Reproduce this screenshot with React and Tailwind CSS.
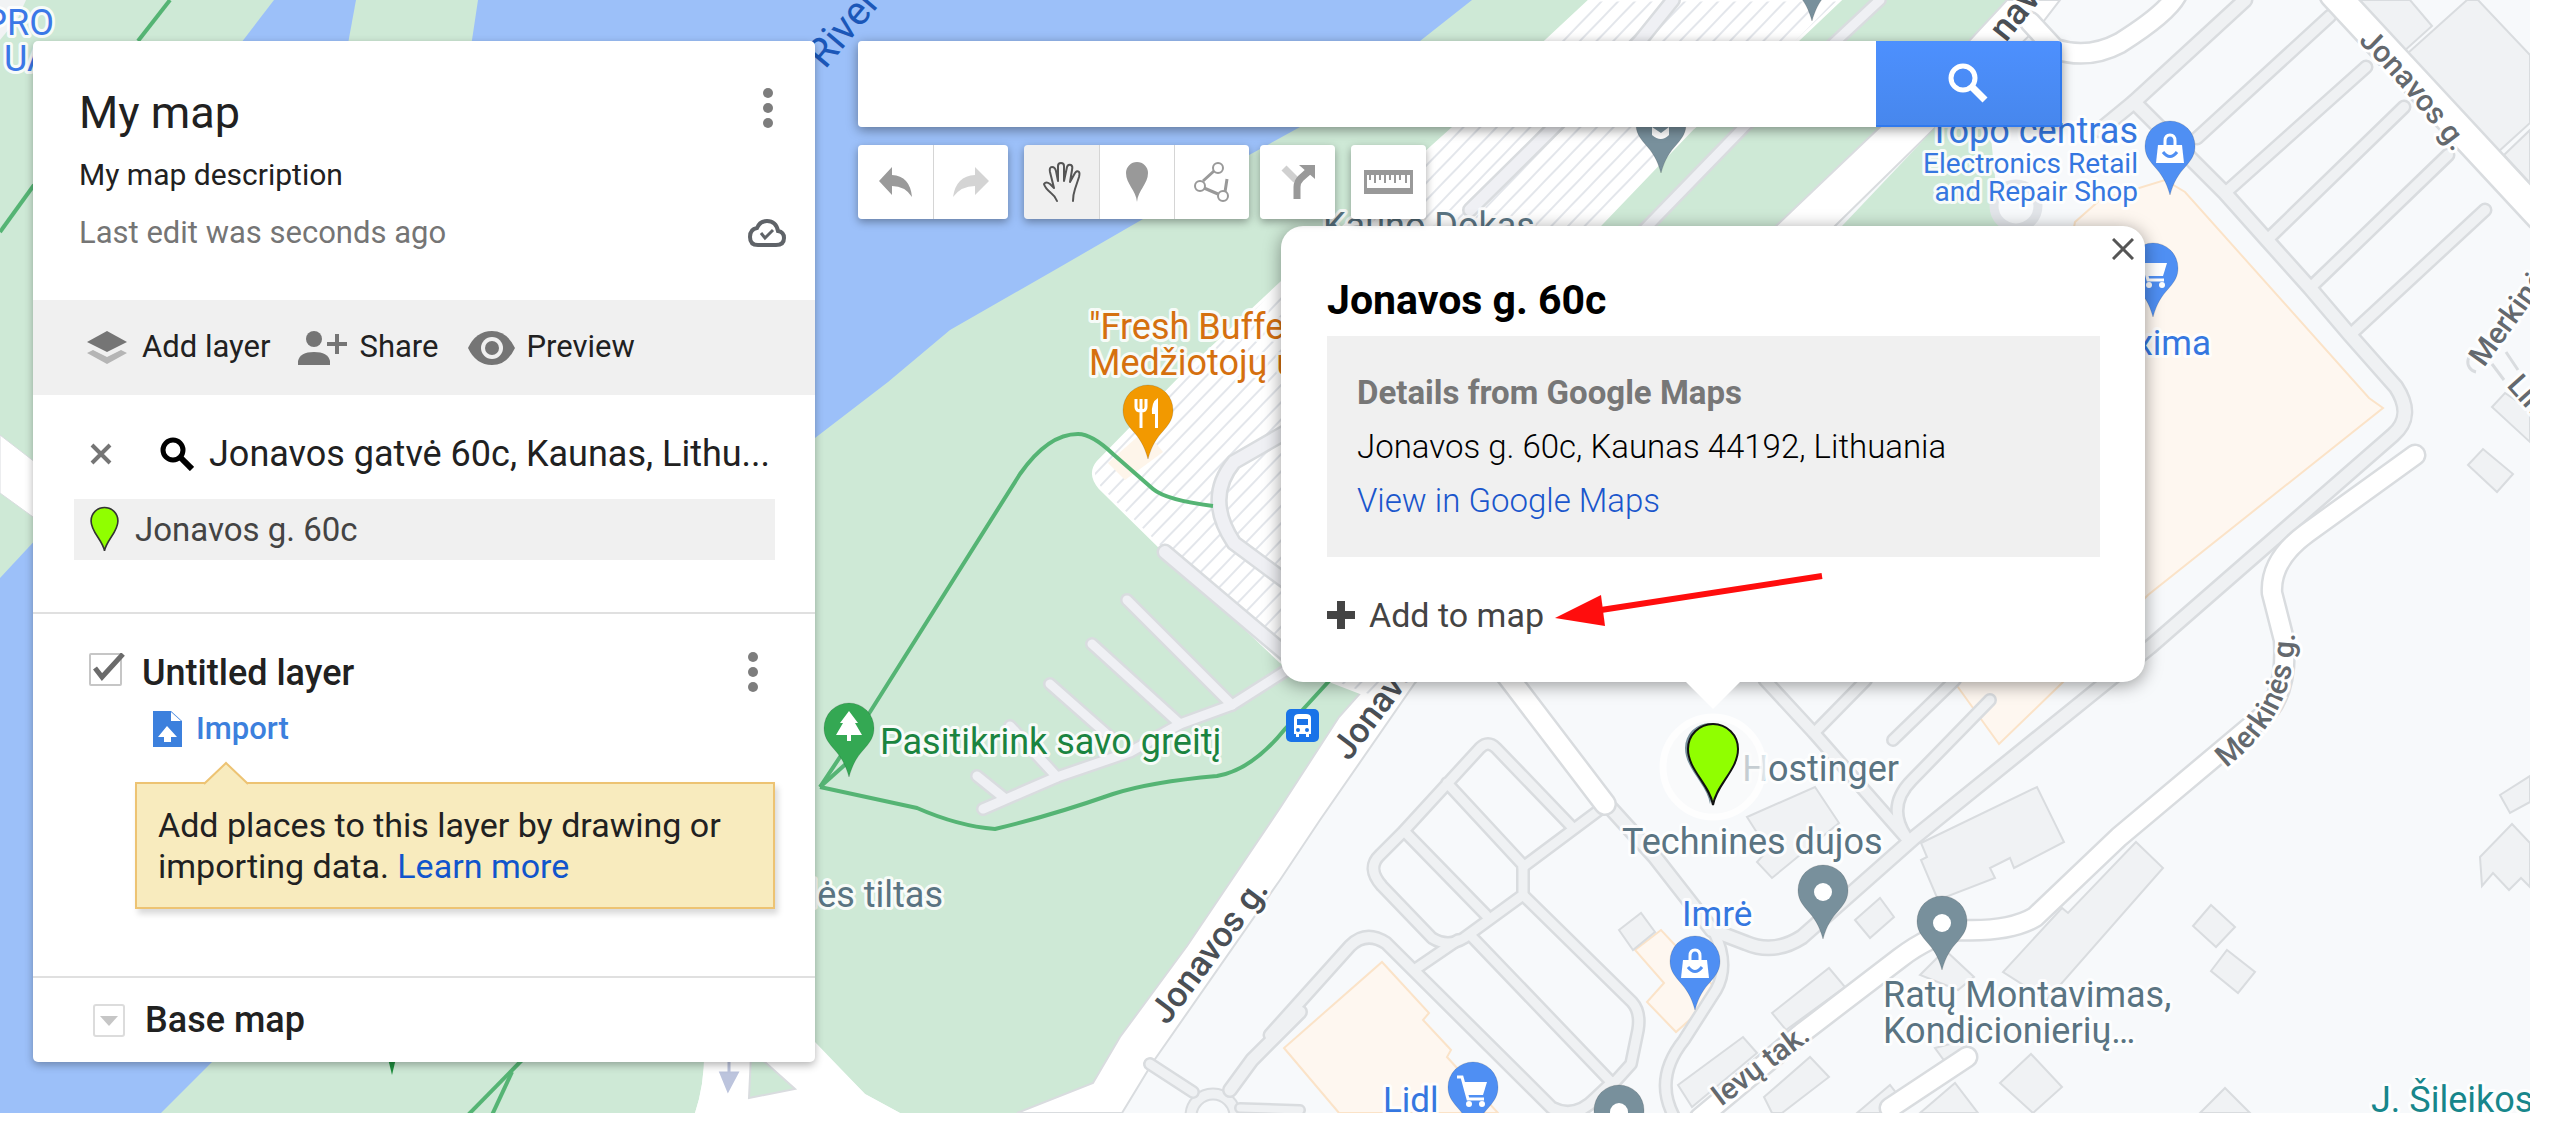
import { useState } from 'react';

const OUTLINE = '#d9dcdf';

// Minor streets: [path, width]
const STREETS = [
  ['M2100 130 L2134 102 L2245 0', 12],
  ['M2134 102 L2225 193 L2267 240 L2310 288 L2350 335 L2396 387 Q2415 416 2393 435 L2150 647 L1915 837 L1802 937 Q1774 955 1746 943 L1712 930 L1655 857 L1606 803', 12],
  ['M2197 138 L2330 16', 10],
  ['M2225 193 L2366 67', 10],
  ['M2267 240 L2404 107', 10],
  ['M2310 288 L2448 155', 10],
  ['M2350 335 L2485 210', 10],
  ['M1572 827 L1496 748 Q1488 740 1480 748 L1402 833 L1380 855 Q1366 868 1382 886 L1432 938 Q1448 948 1464 938 L1523 895 L1523 865 L1447 783', 9],
  ['M1523 867 L1606 805', 9],
  ['M1406 833 L1486 915', 9],
  ['M1417 968 L1458 940', 9],
  ['M1523 895 L1632 1002 Q1641 1012 1638 1030 L1631 1064 L1613 1084', 9],
  ['M1472 937 L1613 1084', 9],
  ['M1270 1035 L1350 946 Q1366 930 1386 943 L1552 1108 Q1575 1120 1596 1098 L1613 1082', 10],
  ['M1714 932 Q1730 965 1716 990 L1684 1040 Q1652 1080 1676 1120', 9],
  ['M1765 680 L1814 733 L1908 840', 10],
  ['M1814 733 L1866 680', 9],
  ['M1893 740 L1955 680', 9],
  ['M1906 836 Q1886 806 1912 780 L1990 700', 9],
  ['M1150 1064 L1193 1092', 9],
  ['M1230 1090 L1252 1060 L1300 1012', 11],
  ['M1240 1108 L1300 1110', 7],
];

const PARK_LANES = [
  ['M983 809 L1057 777 L1130 752 L1180 724 L1232 705 L1290 668', 9],
  ['M1127 600 L1232 705', 9],
  ['M1092 644 L1180 724', 9],
  ['M1050 684 L1110 737', 9],
  ['M1010 726 L1057 777', 9],
  ['M977 776 L1003 797', 9],
  ['M1165 552 L1300 666', 12],
  ['M1300 424 L1234 462 Q1204 498 1234 543 L1300 592', 12],
  ['M1673 0 L1640 41 L1553 128 L1470 210', 11],
  ['M1880 0 L1743 128 L1640 234', 9],
];

const WHITE_ROADS = [
  ['M2334 -6 L2540 216', 27],
  ['M2176 -4 Q2166 14 2120 43 Q2088 60 2055 49 L2030 22', 18],
  ['M2415 455 L2307 533 Q2270 560 2272 593 L2284 640 Q2288 700 2256 722 L2119 837 L2035 917 Q2010 932 1960 930 Q1930 935 1900 958 L1802 1033 L1700 1118', 18],
  ['M1967 1057 L1890 1108', 18],
  ['M1480 640 L1605 804', 19],
];

const BUILDINGS = [
  '2348,0 2410,0 2432,26 2402,53',
  '2408,53 2467,0 2478,0 2530,55 2530,123 2498,152',
  '2504,155 2530,130 2530,183',
  '2468,465 2483,449 2513,474 2497,492',
  '2492,407 2505,393 2530,410 2530,442',
  '1747,817 1815,787 1839,823 1772,878 1757,862 1768,850',
  '1619,930 1641,913 1655,932 1633,950',
  '1855,920 1880,898 1894,917 1870,938',
  '1772,1013 1829,968 1845,987 1786,1030',
  '1678,1085 1743,1037 1757,1053 1692,1107',
  '1764,1097 1810,1057 1829,1077 1782,1113 1772,1113',
  '1857,1113 1890,1085 1904,1103 1895,1113',
  '1921,843 2037,787 2064,842 2014,868 2010,858 1990,868 1995,878 1938,900 1921,860 1927,857',
  '2136,842 2163,868 2047,1000 2003,972 2062,908 2068,913',
  '2211,905 2235,927 2216,947 2193,926',
  '2227,950 2255,972 2238,993 2211,971',
  '2031,1054 2062,1087 2033,1113 2000,1083',
  '2225,1088 2250,1113 2200,1113',
  '2500,795 2530,776 2530,802 2510,813',
  '2480,857 2512,824 2530,843 2530,887 2521,878 2509,890 2493,873 2482,886',
  '1920,1113 1955,1083 1978,1113',
  '1920,975 1945,950 1974,977 1958,990',
  '1935,1048 1965,1040 1972,1055 1951,1070',
];

const SHOPS = [
  '2075,222 2100,200 2165,180 2185,192 2369,398 2383,408 2148,595 2062,683 1999,744 1955,683 2000,600',
  '1635,950 1661,930 1720,993 1676,1032 1647,1002 1664,983',
  '1382,962 1429,1013 1423,1020 1451,1050 1447,1057 1498,1113 1339,1113 1284,1048',
];

const TRAILS = [
  'M820 787 L870 712 L1020 474 Q1048 434 1078 434 Q1092 434 1113 454 L1153 489 Q1166 500 1213 506',
  'M820 787 L917 808 Q958 826 995 829 Q1050 816 1113 794 Q1150 782 1217 776 Q1252 770 1285 729 L1330 680',
  'M820 787 L848 762',
  'M170 0 L138 41',
  'M34 185 L0 232',
  'M524 1058 L468 1115',
  'M512 1072 L492 1115',
];

const PIN = 'M0 0 C-4 -14 -8 -20 -16 -29 C-22 -36 -25 -41 -25 -49 A25 25 0 1 1 25 -49 C25 -41 22 -36 16 -29 C8 -20 4 -14 0 0Z';
const DROP = 'M0 0 C-3 -20 -25 -35 -25 -56 A25 25 0 0 1 25 -56 C25 -35 3 -20 0 0Z';

function Roads({ items, fill }) {
  return (
    <g fill="none" strokeLinejoin="round" strokeLinecap="round">
      {items.map(([d, w]) => <path key={d} d={d} stroke={OUTLINE} strokeWidth={w + 5} />)}
      {items.map(([d, w]) => <path key={d} d={d} stroke={fill} strokeWidth={w} />)}
    </g>
  );
}

function MapPin({ x, y, color, children }) {
  return (
    <g transform={`translate(${x} ${y})`}>
      <path d={PIN} fill={color} stroke="#00000022" />
      {children}
    </g>
  );
}

const Dot = () => <circle cy="-47" r="9" fill="#fff" />;

const Bag = () => (
  <g transform="translate(0 -46)">
    <path d="M-12 -4 H12 L14 14 H-14Z" fill="#fff" />
    <path d="M-5 -4 V-8 Q-5 -14 0 -14 Q5 -14 5 -8 V-4" fill="none" stroke="#fff" strokeWidth="3" />
    <path d="M-7 3 Q0 12 7 3" fill="none" stroke="#4f8ff3" strokeWidth="3" />
  </g>
);

const Cart = () => (
  <g transform="translate(0 -46)">
    <path d="M-9 -8 H14 L10 5 H-6Z" fill="#fff" />
    <path d="M-16 -13 H-11 L-5 9 H11" fill="none" stroke="#fff" strokeWidth="3" />
    <circle cx="-4" cy="14" r="3" fill="#fff" />
    <circle cx="9" cy="14" r="3" fill="#fff" />
  </g>
);

function Label({ x, y, color, size = 'text-[36px]', anchor = 'start', rotate, bold, children }) {
  return (
    <text
      x={x} y={y} textAnchor={anchor} fill={color} stroke="#ffffffd9" strokeWidth="6" strokeLinejoin="round"
      transform={rotate ? `rotate(${rotate} ${x} ${y})` : undefined}
      className={`[paint-order:stroke] ${size} ${bold ? 'font-medium' : 'font-normal'}`}
    >
      {children}
    </text>
  );
}

function MapCanvas() {
  return (
    <svg viewBox="0 0 2530 1113" className="block w-full h-auto overflow-hidden" role="img" aria-label="Map of Kaunas">
      <defs>
        <pattern id="hatch" width="12" height="12" patternUnits="userSpaceOnUse" patternTransform="rotate(44)">
          <rect width="12" height="12" fill="#fff" />
          <rect width="2" height="12" fill="#e3e6eb" />
        </pattern>
        <path id="jonavosEast" d="M2358 42 Q2402 82 2468 172" />
        <path id="merkines" d="M2226 768 Q2286 722 2293 660 L2298 600" />
      </defs>
      <rect width="2530" height="1113" fill="#f7f9fb" />

      {/* parkland */}
      <path d="M0 0 H2007 L1969 41 L1880 127 L1776 226 L1339 717 L1280 808 L1187 946 L1120 1037 L1093 1083 L1017 1113 H900 L865 1094 L815 1044 L780 1040 H704 Q706 1080 695 1113 H0Z" fill="#cee9d6" />
      <path d="M695 1113 Q706 1080 704 1040 L815 1042 L865 1094 L900 1113Z" fill="#fff" />
      <path d="M751 1055 L765 1062 L795 1089 L749 1098Z" fill="#cee9d6" stroke={OUTLINE} strokeWidth="2" />
      <path d="M0 0 H26 L18 18 L0 40Z" fill="#f1f3f4" />

      {/* river */}
      <path d="M478 0 H1472 L1420 41 L1300 127 L1240 160 L1143 219 L1060 267 L950 330 L888 382 L815 438 L700 520 H400Z" fill="#9cc0f9" />
      <path d="M274 0 H356 L345 60 H228Z" fill="#9cc0f9" />
      <path d="M40 535 L0 578 V1113 H161 L212 1062 L300 900Z" fill="#9cc0f9" />
      <path d="M0 435 L40 466 V522 L0 493Z" fill="#fff" stroke={OUTLINE} />

      {/* main road */}
      <path d="M2007 0 L1969 41 L1880 127 L1776 226 L1339 717 L1280 808 L1187 946 L1120 1037 L1093 1083 L1017 1113 H1122 L1153 1062 L1280 880 L1320 820 L1415 683 L1835 226 L1935 128 L2043 22 L2060 0Z" fill="#fff" stroke={OUTLINE} strokeWidth="2" />
      <path d="M1842 226 L1935 128 L1990 128 L2000 226Z" fill="#cee9d6" />

      {/* docks */}
      <path d="M1590 0 H1840 L1797 41 L1693 128 L1600 225 L1380 700 L1281 662 L1165 552 L1100 488 Q1088 474 1098 462 L1186 372 L1281 283 L1453 128Z" fill="url(#hatch)" stroke="#fff" strokeWidth="3" />
      <path d="M1108 463 L1145 430 L1163 452 L1125 480Z" fill="#fef5ea" />

      <Roads items={PARK_LANES} fill="#eff0f4" />
      <circle cx="2016" cy="206" r="22" fill="#f7f9fb" stroke="#e2e5e9" strokeWidth="9" />

      <g fill="#fef7f0" stroke="#fbe3c8" strokeWidth="2">
        {SHOPS.map((p) => <polygon key={p} points={p} />)}
      </g>
      <g fill="#f0f2f4" stroke={OUTLINE} strokeWidth="2">
        {BUILDINGS.map((p) => <polygon key={p} points={p} />)}
      </g>
      <circle cx="1213" cy="1116" r="22" fill="#f7f9fb" stroke={OUTLINE} strokeWidth="13" />
      <circle cx="1213" cy="1116" r="22" fill="none" stroke="#eff1f3" strokeWidth="9" />
      <Roads items={STREETS} fill="#eff1f3" />
      <Roads items={WHITE_ROADS} fill="#fff" />
      <path d="M2480 352 A9 9 0 1 0 2476 372 M2492 364 L2504 380 M2506 352 L2518 370" fill="none" stroke={OUTLINE} strokeWidth="3" />

      <g fill="none" stroke="#55b474" strokeWidth="4" strokeLinejoin="round">
        {TRAILS.map((d) => <path key={d} d={d} />)}
      </g>
      <path d="M729 1055 V1078 M721 1073 L728 1090 L737 1073Z" fill="#bcc4dd" stroke="#bcc4dd" strokeWidth="3" />

      <MapPin x={849} y={777} color="#34a853">
        <path d="M0 -66 L9 -54 H6 L13 -42 H2 V-36 H-2 V-42 H-13 L-6 -54 H-9Z" fill="#fff" />
      </MapPin>
      <path d="M386 1050 L392 1075 L398 1050Z" fill="#1e8e3e" />
      <MapPin x={1148} y={459} color="#f29900">
        <path d="M-12 -60 V-52 Q-12 -48 -7 -48 Q-2 -48 -2 -52 V-60 M-7 -60 V-31" fill="none" stroke="#fff" strokeWidth="3" />
        <path d="M10 -61 Q3 -57 4 -45 H7 V-31 H10Z" fill="#fff" />
      </MapPin>
      <MapPin x={1661} y={173} color="#78909c">
        <path d="M-9 -46 L0 -40 L8 -46 V-38 Q0 -30 -9 -38Z" fill="#fff" />
      </MapPin>
      <MapPin x={1812} y={21} color="#78909c" />
      <MapPin x={2170} y={195} color="#4f8ff3"><Bag /></MapPin>
      <MapPin x={2153} y={317} color="#4f8ff3"><Cart /></MapPin>
      <MapPin x={1695} y={1010} color="#4f8ff3"><Bag /></MapPin>
      <MapPin x={1473} y={1136} color="#4f8ff3"><Cart /></MapPin>
      <MapPin x={1823} y={939} color="#78909c"><Dot /></MapPin>
      <MapPin x={1942} y={970} color="#78909c"><Dot /></MapPin>
      <MapPin x={1619} y={1159} color="#78909c"><Dot /></MapPin>

      {/* bus stop */}
      <g transform="translate(1286 709)">
        <rect width="33" height="33" rx="5" fill="#1a73e8" />
        <path d="M8 9 Q8 5 13 5 H20 Q25 5 25 9 V25 H23 V28 H20 V25 H13 V28 H10 V25 H8Z" fill="#fff" />
        <path d="M11 10 H22 V16 H11Z" fill="#1a73e8" />
        <circle cx="12" cy="21" r="2" fill="#1a73e8" />
        <circle cx="21" cy="21" r="2" fill="#1a73e8" />
      </g>

      <Label x={54} y={35} anchor="end" color="#3b78e7">PRO</Label>
      <Label x={4} y={71} color="#3b78e7">UA</Label>
      <text x="825" y="70" transform="rotate(-50 825 70)" fill="#1b57b8" className="text-[40px]">River</text>
      <Label x={1089} y={339} color="#d5700f">"Fresh Buffet"</Label>
      <Label x={1089} y={375} color="#d5700f">Medžiotojų užeiga</Label>
      <Label x={880} y={754} color="#1b8440">Pasitikrink savo greitį</Label>
      <Label x={943} y={907} anchor="end" color="#5a7482">Vilijampolės tiltas</Label>
      <Label x={1323} y={238} color="#5a7482">Kauno Dokas</Label>
      <Label x={1167} y={1026} rotate={-53} bold color="#4a4f55" size="text-[35px]">Jonavos g.</Label>
      <Label x={1349} y={762} rotate={-53} bold color="#4a4f55" size="text-[35px]">Jonavos g.</Label>
      <Label x={2006} y={43} rotate={-51} bold color="#4a4f55" size="text-[36px]">navos g.</Label>
      <g fill="#64696e" stroke="#fff" strokeWidth="6" className="[paint-order:stroke] text-[30px] font-medium">
        <text><textPath href="#jonavosEast">Jonavos g.</textPath></text>
        <text><textPath href="#merkines">Merkinės g.</textPath></text>
      </g>
      <Label x={2484} y={368} rotate={-54} bold color="#64696e" size="text-[30px]">Merkinės g.</Label>
      <Label x={2506} y={386} rotate={48} bold color="#64696e" size="text-[30px]">Lino</Label>
      <Label x={1721} y={1107} rotate={-37} bold color="#64696e" size="text-[30px]">Ievų tak.</Label>
      <Label x={2138} y={143} anchor="end" color="#3577e0">Topo centras</Label>
      <Label x={2138} y={173} anchor="end" color="#3577e0" size="text-[28px]">Electronics Retail</Label>
      <Label x={2138} y={201} anchor="end" color="#3577e0" size="text-[28px]">and Repair Shop</Label>
      <Label x={2211} y={355} anchor="end" color="#3577e0" size="text-[35px]">Maxima</Label>
      <Label x={1682} y={926} color="#3577e0" size="text-[35px]">Imrė</Label>
      <Label x={1383} y={1112} color="#3577e0" size="text-[35px]">Lidl</Label>
      <Label x={1899} y={781} anchor="end" color="#5a7482">Hostinger</Label>
      <Label x={1622} y={854} color="#5a7482">Technines dujos</Label>
      <Label x={1883} y={1007} color="#5a7482">Ratų Montavimas,</Label>
      <Label x={1883} y={1043} color="#5a7482">Kondicionierių…</Label>
      <Label x={2371} y={1112} color="#17868b">J. Šileikos</Label>

      {/* selected place */}
      <circle cx="1713" cy="767" r="50" fill="#fafafaaa" stroke="#ffffffcc" strokeWidth="7" />
      <g transform="translate(1713 805)">
        <path d={DROP} fill="#78909c" transform="translate(-3 -1)" />
        <path d={DROP} fill="#90ff00" stroke="#111" strokeWidth="2" />
      </g>
    </svg>
  );
}

function MoreDots() {
  return (
    <svg width="36" height="46" viewBox="0 0 36 46" fill="#7d7d7d" aria-hidden="true">
      <circle cx="18" cy="8" r="5" /><circle cx="18" cy="23" r="5" /><circle cx="18" cy="38" r="5" />
    </svg>
  );
}

function LayersPanel() {
  const [visible, setVisible] = useState(true);
  return (
    <aside className="w-[782px] shrink-0 bg-white rounded-[5px] shadow-[0_3px_8px_rgba(0,0,0,0.3)] text-[#212121]">
      <header className="pl-[46px] pr-[29px] pt-11 pb-[47px]">
        <div className="flex items-start justify-between">
          <h1 className="text-[45px] leading-[56px]">My map</h1>
          <button type="button" aria-label="Map options"><MoreDots /></button>
        </div>
        <p className="mt-3.5 text-[30px] leading-10">My map description</p>
        <div className="mt-[18px] flex items-center justify-between">
          <span className="text-[31px] leading-10 text-[#757575]">Last edit was seconds ago</span>
          <svg width="38" height="28" viewBox="0 0 38 28" fill="none" stroke="#5f6368" strokeWidth="4" aria-label="Saved">
            <path d="M10 26 H28 Q36 26 36 19 Q36 13 30 12 Q28 2 19 2 Q12 2 9 9 Q2 10 2 18 Q2 26 10 26Z" />
            <path d="M13 14 L17 19 L25 11" strokeWidth="3" />
          </svg>
        </div>
      </header>

      <nav className="h-[95px] bg-[#f0f0f0] pl-[54px] flex items-center text-[31px]">
        <button type="button" className="flex items-center gap-[15px]">
          <svg width="40" height="34" viewBox="0 0 40 34" aria-hidden="true">
            <path d="M0 22 L6 19 L20 26 L34 19 L40 22 L20 33Z" fill="#b5b5b5" />
            <path d="M20 0 L40 11 L20 21 L0 11Z" fill="#757575" />
          </svg>
          Add layer
        </button>
        <button type="button" className="ml-7 flex items-center gap-[11px]">
          <svg width="50" height="34" viewBox="0 0 50 34" fill="#757575" aria-hidden="true">
            <circle cx="16" cy="8" r="8" />
            <path d="M0 34 V30 Q2 21 16 21 Q30 21 32 30 V34Z" />
            <path d="M37 3 H41 V11 H49 V15 H41 V23 H37 V15 H29 V11 H37Z" />
          </svg>
          Share
        </button>
        <button type="button" className="ml-[30px] flex items-center gap-[11px]">
          <svg width="47" height="34" viewBox="0 0 47 34" aria-hidden="true">
            <path d="M0 17 Q8 0 24 0 Q39 0 47 17 Q39 34 24 34 Q8 34 0 17Z" fill="#757575" />
            <circle cx="24" cy="17" r="11" fill="#f0f0f0" />
            <circle cx="24" cy="17" r="7" fill="#757575" />
          </svg>
          Preview
        </button>
      </nav>

      <section className="pt-[35px] pb-[52px]">
        <div className="pl-[57px] flex items-center">
          <button type="button" aria-label="Close search results">
            <svg width="22" height="22" viewBox="0 0 22 22" stroke="#757575" strokeWidth="4" aria-hidden="true">
              <path d="M2 2 L20 20 M20 2 L2 20" />
            </svg>
          </button>
          <svg width="34" height="34" viewBox="0 0 34 34" fill="none" stroke="#000" className="ml-12 mr-[15px]" aria-hidden="true">
            <circle cx="13" cy="13" r="10" strokeWidth="5" />
            <path d="M21 21 L32 32" strokeWidth="6" />
          </svg>
          <span className="text-[36px] leading-[48px] whitespace-nowrap">Jonavos gatvė 60c, Kaunas, Lithu...</span>
        </div>
        <button type="button" className="mt-[21px] ml-[41px] w-[701px] h-[61px] bg-[#f0f0f0] pl-4 flex items-center gap-4 text-[33px] text-[#444]">
          <svg width="29" height="47" viewBox="-27 -83 54 86" aria-hidden="true">
            <path d={DROP} fill="#90ff00" stroke="#333" strokeWidth="3" />
          </svg>
          Jonavos g. 60c
        </button>
      </section>

      <section className="border-t-2 border-[#e0e0e0] pt-[35px] pb-[67px]">
        <div className="pl-14 pr-11 flex items-start justify-between">
          <label className="flex items-start gap-5 text-[36px] leading-[48px] font-medium">
            <span className="relative mt-1 size-[33px] shrink-0">
              <input type="checkbox" checked={visible} onChange={(e) => setVisible(e.target.checked)}
                className="block appearance-none size-[33px] border-2 border-[#c6c6c6] rounded-[2px] bg-white" />
              {visible && (
                <svg width="36" height="33" viewBox="0 0 36 33" className="pointer-events-none absolute left-0 top-0" aria-hidden="true">
                  <path d="M6 15 L13 24 L34 1" fill="none" stroke="#6b6b6b" strokeWidth="5" />
                </svg>
              )}
            </span>
            Untitled layer
          </label>
          <button type="button" aria-label="Layer options"><MoreDots /></button>
        </div>
        <button type="button" className="mt-3 ml-[120px] flex items-center gap-3.5 text-[31px] leading-10 font-medium text-[#3c80dd]">
          <svg width="29" height="36" viewBox="0 0 29 36" aria-hidden="true">
            <path d="M0 0 H18 L29 10 V36 H0Z" fill="#3c80dd" />
            <path d="M18 1 V10 H28Z" fill="#fff" />
            <path d="M14 15 L24 26 H18 V31 H11 V26 H5Z" fill="#fff" />
          </svg>
          Import
        </button>
        <div className="relative mt-[33px] ml-[102px] mr-10 border-2 border-[#edc373] bg-[#f8ebbe] pt-[21px] pb-5 px-[21px] shadow-[3px_5px_6px_rgba(0,0,0,0.15)] text-[34px] leading-[41px]">
          <svg width="44" height="24" viewBox="0 0 44 24" className="absolute left-[67px] -top-[23px]" aria-hidden="true">
            <path d="M0 23 L22 2 L44 23" fill="#f8ebbe" stroke="#edc373" strokeWidth="2" />
          </svg>
          Add places to this layer by drawing or<br />importing data.{' '}
          <a href="#learn-more" className="text-[#1155cc]">Learn more</a>
        </div>
      </section>

      <section className="border-t-2 border-[#e0e0e0]">
        <button type="button" className="w-full h-[84px] pl-[60px] flex items-center gap-5 text-[36px] font-medium">
          <svg width="32" height="33" viewBox="0 0 32 33" aria-hidden="true">
            <rect x="1" y="1" width="30" height="31" rx="2" fill="#fff" stroke="#dcdcdc" strokeWidth="2" />
            <path d="M7 12 H25 L16 22Z" fill="#c6c6c6" />
          </svg>
          Base map
        </button>
      </section>
    </aside>
  );
}

function Tool({ label, active, divided, children }) {
  return (
    <button type="button" aria-label={label}
      className={`w-[75px] h-[74px] flex items-center justify-center ${active ? 'bg-[#f0f0f0]' : 'bg-white'} ${divided ? 'border-l border-[#d5d5d5]' : ''}`}>
      {children}
    </button>
  );
}

const group = 'flex rounded-[4px] overflow-hidden shadow-[0_3px_9px_rgba(0,0,0,0.35)]';

function Toolbar() {
  return (
    <div className="mt-[18px] flex">
      <div className={group}>
        <Tool label="Undo">
          <svg width="34" height="30" viewBox="0 0 34 30" fill="#9a9a9a"><path d="M0 14 L13 0 V8 Q31 9 33 30 Q26 19 13 19 V28Z" /></svg>
        </Tool>
        <Tool label="Redo" divided>
          <svg width="36" height="30" viewBox="0 0 36 30" fill="#d4d4d4"><path d="M36 14 L22 0 V8 Q3 9 0 30 Q8 19 22 19 V28Z" /></svg>
        </Tool>
      </div>
      <div className={`${group} ml-4`}>
        <Tool label="Select items" active>
          <svg width="40" height="42" viewBox="0 0 40 42" fill="none" stroke="#555" strokeWidth="2" strokeLinejoin="round" strokeLinecap="round">
            <path d="M15 40 Q13 35 9 32 Q3 27 2 23 Q4 20 8 23 L12 27 L8 11 Q7 6 10 6 Q13 6 14 10 L16 20 L16 5 Q16 2 19 2 Q22 2 22 5 L22 20 L25 6 Q26 3 29 4 Q31 5 30 9 L28 21 L33 12 Q35 9 37 11 Q38 12 37 16 L33 28 Q31 34 31 40" />
          </svg>
        </Tool>
        <Tool label="Add marker" divided>
          <svg width="22" height="40" viewBox="0 0 22 40" fill="#999"><path d="M11 40 C10 28 0 22 0 11 A11 11 0 0 1 22 11 C22 22 12 28 11 40Z" /></svg>
        </Tool>
        <Tool label="Draw a line" divided>
          <svg width="36" height="42" viewBox="0 0 36 42" fill="none" stroke="#999" strokeWidth="3">
            <path d="M9 20 L20 10 M10 27 L24 33 M31 31 L33 18" />
            <circle cx="24" cy="7" r="5" strokeWidth="2" /><circle cx="6" cy="25" r="5" strokeWidth="2" /><circle cx="29" cy="35" r="5" strokeWidth="2" />
          </svg>
        </Tool>
      </div>
      <div className={`${group} ml-[11px]`}>
        <Tool label="Add directions">
          <svg width="34" height="34" viewBox="0 0 34 34" fill="none" strokeWidth="7">
            <path d="M3 3 L15 15" stroke="#d0d0d0" />
            <path d="M16 34 V22 Q16 17 20 13 L28 6" stroke="#999" />
            <path d="M18 0 H34 V14Z" fill="#999" />
          </svg>
        </Tool>
      </div>
      <div className={`${group} ml-4`}>
        <Tool label="Measure distances and areas">
          <svg width="49" height="24" viewBox="0 0 49 24"><path d="M0 0 H49 V24 H0Z" fill="#999" />
            <path d="M3 5 H46 V18 H3Z" fill="#fff" />
            <path d="M6 5 V10 M11 5 V13 M16 5 V10 M21 5 V13 M26 5 V10 M31 5 V13 M36 5 V10 M42 5 V13" stroke="#999" strokeWidth="2" />
          </svg>
        </Tool>
      </div>
    </div>
  );
}

function PlacePopup() {
  return (
    <div className="absolute left-[1281px] top-[226px] w-[864px] bg-white rounded-[22px] pt-[50px] pb-[43px] pl-[46px] pr-[45px] shadow-[0_3px_18px_rgba(0,0,0,0.4)] text-black">
      <button type="button" aria-label="Close" className="absolute right-[11px] top-[12px]">
        <svg width="22" height="22" viewBox="0 0 22 22" stroke="#555" strokeWidth="3" aria-hidden="true"><path d="M1 1 L21 21 M21 1 L1 21" /></svg>
      </button>
      <h2 className="text-[41px] leading-[48px] font-bold">Jonavos g. 60c</h2>
      <div className="mt-3 bg-[#f0f0f0] pt-[30px] pb-[29px] px-[30px] text-[33px] leading-[54px] font-light">
        <h3 className="font-bold text-[#777]">Details from Google Maps</h3>
        <p>Jonavos g. 60c, Kaunas 44192, Lithuania</p>
        <a href="#view" className="block text-[#1a56cc]">View in Google Maps</a>
      </div>
      <button type="button" className="mt-[34px] flex items-center gap-3.5 text-[34px] leading-[48px] text-[#444]">
        <svg width="28" height="28" viewBox="0 0 28 28" fill="#444" aria-hidden="true"><path d="M10 0 H18 V10 H28 V18 H18 V28 H10 V18 H0 V10 H10Z" /></svg>
        Add to map
      </button>
      <svg width="270" height="54" viewBox="0 0 270 54" className="absolute left-[274px] top-[346px]" aria-hidden="true">
        <path d="M267 4 L46 38" stroke="#ff0d0d" strokeWidth="6" />
        <path d="M0 46 L46 23 L50 54Z" fill="#ff0d0d" />
      </svg>
      <svg width="54" height="28" viewBox="0 0 54 28" className="absolute left-[405px] top-full" aria-hidden="true">
        <path d="M0 0 H54 L27 27Z" fill="#fff" />
      </svg>
    </div>
  );
}

export default function App() {
  const [query, setQuery] = useState('');
  return (
    <div className="relative overflow-hidden bg-white pr-[30px] pb-[13px] font-[Roboto,sans-serif]">
      <MapCanvas />
      <PlacePopup />
      <div className="absolute inset-0 pointer-events-none">
        <div className="flex items-start gap-[43px] pt-[41px] px-[33px] *:pointer-events-auto">
          <LayersPanel />
          <main>
            <form className="flex h-[86px] w-[1204px] rounded-[4px] overflow-hidden shadow-[0_3px_12px_rgba(0,0,0,0.4)]" onSubmit={(e) => e.preventDefault()}>
              <input type="text" aria-label="Search" value={query} onChange={(e) => setQuery(e.target.value)}
                className="flex-1 min-w-0 bg-white px-6 text-[34px] outline-none" />
              <button type="submit" aria-label="Search"
                className="w-[186px] flex items-center justify-center bg-linear-to-b from-[#4d90fe] to-[#4787ed] border-b-2 border-r-2 border-[#3079ed]">
                <svg width="40" height="40" viewBox="0 0 40 40" fill="none" stroke="#fff" aria-hidden="true">
                  <circle cx="15" cy="15" r="12" strokeWidth="5" />
                  <path d="M24 24 L37 37" strokeWidth="7" />
                </svg>
              </button>
            </form>
            <Toolbar />
          </main>
        </div>
      </div>
    </div>
  );
}
